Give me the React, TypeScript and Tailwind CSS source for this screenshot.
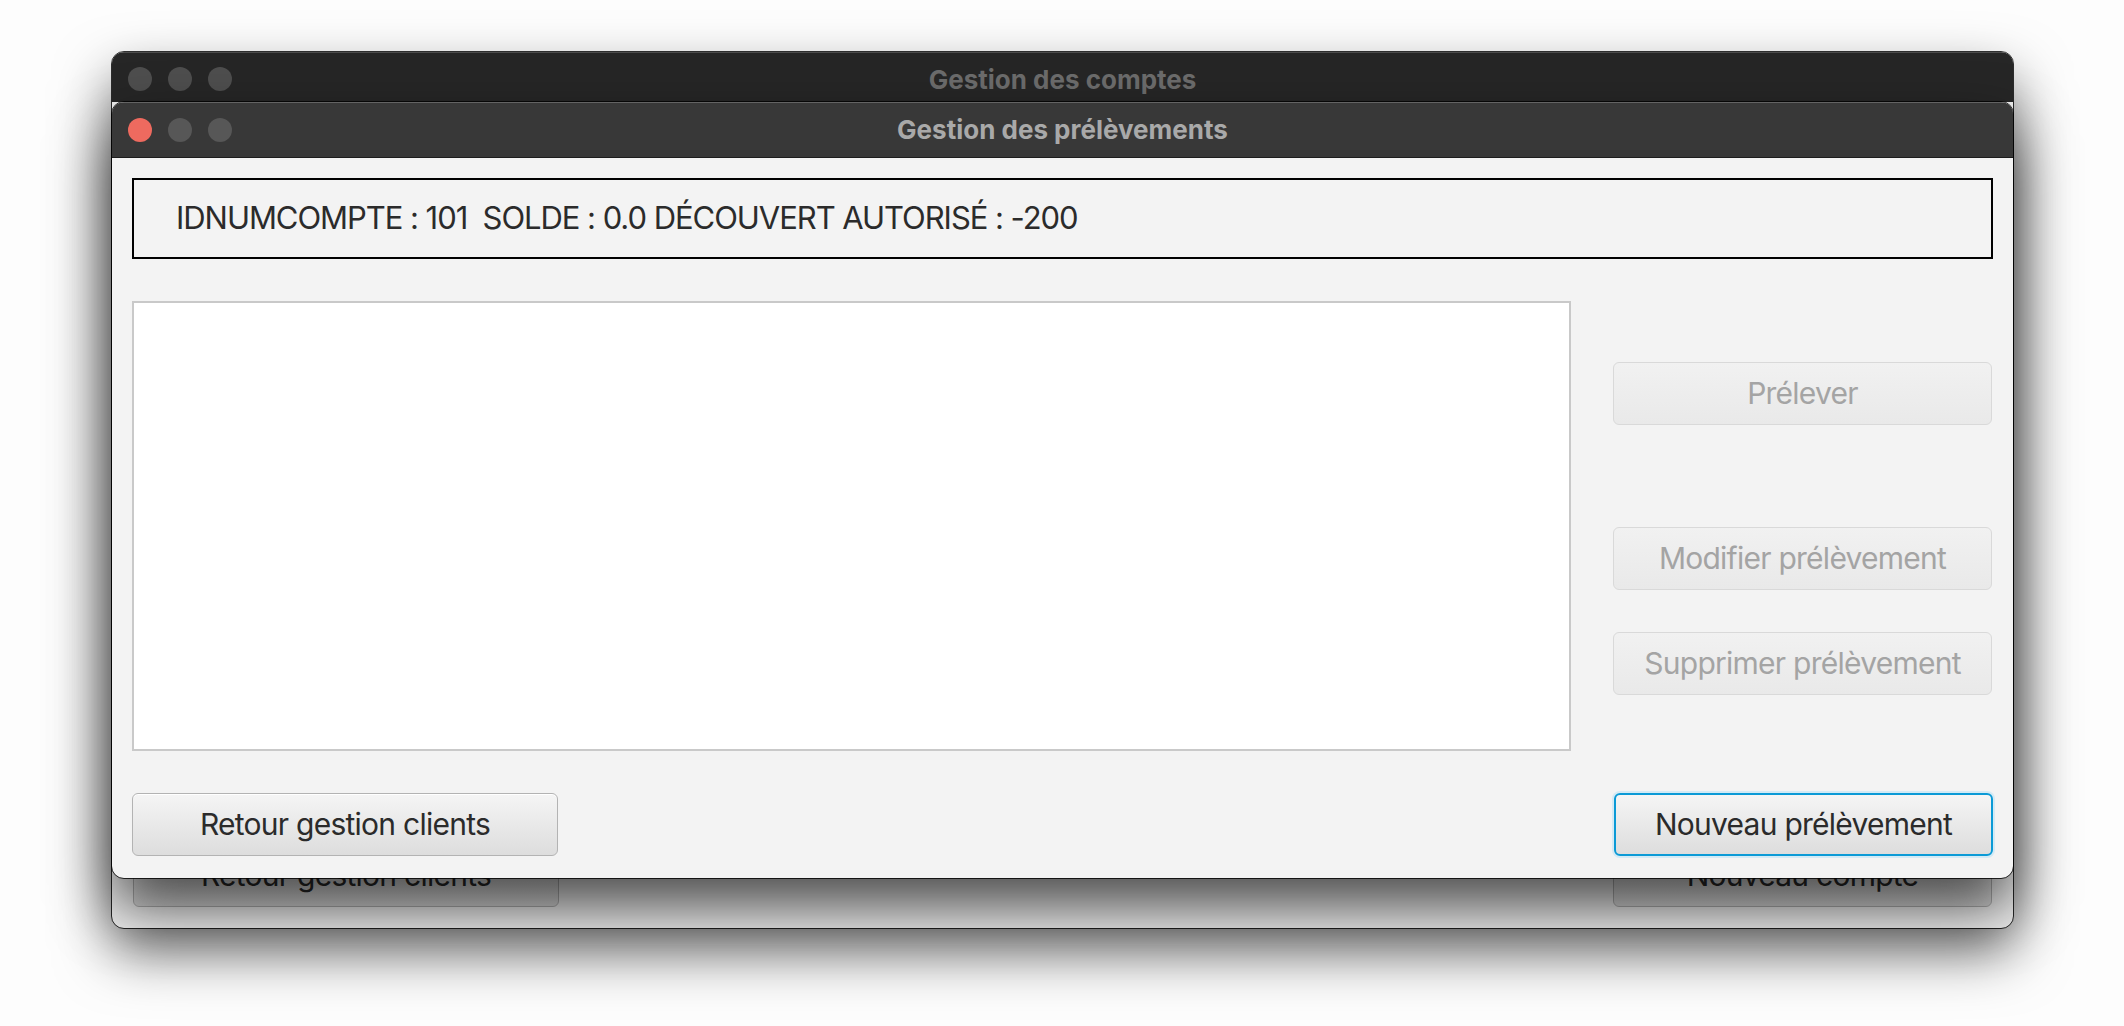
import React from "react";

type BtnKind = "normal" | "disabled" | "focused";

const btnClasses: Record<BtnKind, string> = {
    normal: "border-[1.5px] border-[#b3b3b3] bg-linear-to-b from-[#f5f5f5] to-[#dddddd] text-[#2b2b2b] shadow-[inset_0_1px_0_#ffffff]",
    disabled: "border-[1.5px] border-[#d9d9d9] bg-linear-to-b from-[#f1f1f1] to-[#e9e9e9] text-[#a4a4a4]",
    focused: "border-[2.5px] border-[#0b9ad6] bg-linear-to-b from-[#f5f5f5] to-[#dddddd] text-[#2b2b2b] shadow-[0_0_0_2px_#d3eaf5]",
};

const Button = ({ label, kind = "normal", className = "" }: { label: string; kind?: BtnKind; className?: string }) => (
    <div
        className={`flex h-[63px] items-center justify-center rounded-[6px] text-[30px] tracking-[-0.75px] ${btnClasses[kind]} ${className}`}
    >
        {label}
    </div>
);

const TrafficLights = ({ active }: { active: boolean }) => (
    <div className="flex items-center gap-4">
        <span className={`h-6 w-6 rounded-full ${active ? "bg-[#ee6a5f]" : "bg-[#4e4e4e]"}`} />
        <span className={`h-6 w-6 rounded-full ${active ? "bg-[#575757]" : "bg-[#4e4e4e]"}`} />
        <span className={`h-6 w-6 rounded-full ${active ? "bg-[#575757]" : "bg-[#4e4e4e]"}`} />
    </div>
);

const TitleBar = ({ title, active }: { title: string; active: boolean }) => (
    <div
        className={`relative flex items-center px-4 ${
            active
                ? "h-[56px] bg-[#383838] shadow-[inset_0_1px_0_rgba(255,255,255,0.22)] border-b border-[#1c1c1c]"
                : "h-[50px] bg-[#262626] pt-1 shadow-[inset_0_1px_0_rgba(255,255,255,0.18)]"
        }`}
    >
        <TrafficLights active={active} />
        <div
            className={`absolute inset-0 flex items-center justify-center text-[26px] font-bold ${
                active ? "text-[#a9a9a9]" : "pt-[5px] text-[#6c6c6c]"
            }`}
        >
            {title}
        </div>
    </div>
);

export default function App() {
    return (
        <div className="relative h-[1026px] w-[2124px] overflow-hidden bg-[#fdfdfd] font-[Inter,sans-serif]">
            {/* back window */}
            <div className="absolute left-[112px] top-[52px] flex h-[876px] w-[1901px] flex-col overflow-hidden rounded-[12px] outline outline-1 outline-black/80 shadow-[0_25px_55px_rgba(0,0,0,0.55)]">
                <TitleBar title="Gestion des comptes" active={false} />
                <div className="flex flex-1 flex-col justify-end bg-[#f3f3f3] px-[21px] pb-[21px]">
                    <div className="flex items-center justify-between">
                        <Button label="Retour gestion clients" className="w-[426px]" />
                        <Button label="Nouveau compte" className="w-[379px]" />
                    </div>
                </div>
            </div>

            {/* front window */}
            <div className="absolute left-[112px] top-[102px] flex h-[776px] w-[1901px] flex-col overflow-hidden rounded-[12px] outline outline-1 outline-black/80 shadow-[0_30px_60px_rgba(0,0,0,0.7)]">
                <TitleBar title="Gestion des prélèvements" active />
                <div className="flex flex-1 flex-col gap-[42px] bg-[#f3f3f3] px-[20px] pb-[21px] pt-[20px]">
                    <div className="flex h-[81px] items-center border-2 border-black pl-[42px] text-[31px] tracking-[-1.05px] text-[#2b2b2b]">
                        IDNUMCOMPTE : 101&nbsp; SOLDE : 0.0 DÉCOUVERT AUTORISÉ : -200
                    </div>

                    <div className="flex h-[450px] gap-[42px]">
                        <div className="w-[1439px] border-2 border-[#c9c9c9] bg-white" />
                        <div className="flex w-[379px] flex-col pt-[61px]">
                            <Button label="Prélever" kind="disabled" />
                            <Button label="Modifier prélèvement" kind="disabled" className="mt-[102px]" />
                            <Button label="Supprimer prélèvement" kind="disabled" className="mt-[42px]" />
                        </div>
                    </div>

                    <div className="flex items-center justify-between">
                        <Button label="Retour gestion clients" className="w-[426px]" />
                        <Button label="Nouveau prélèvement" kind="focused" className="w-[379px]" />
                    </div>
                </div>
            </div>
        </div>
    );
}
